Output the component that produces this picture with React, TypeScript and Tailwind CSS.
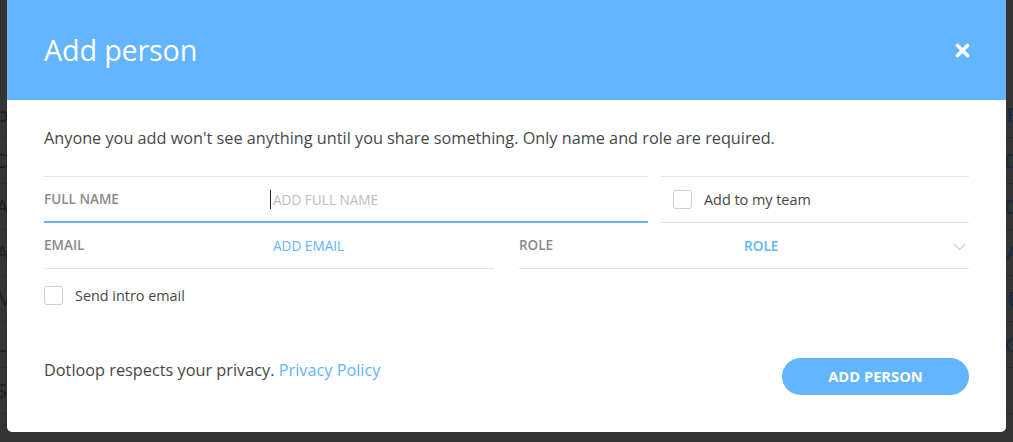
import React from "react";

const bgRowsLeft = ["p", "D", "Ac", "Ac", "M", "Li", "Sh"];
const bgRowsRight = ["R", "D", "D", "A", "E", "G", ""];

function Checkbox() {
  return <span className="block w-[19px] h-[19px] rounded-[3px] border border-[#cfcfcf] bg-white shrink-0" />;
}

export default function App() {
  return (
    <div
      className="relative w-full h-[442px] overflow-hidden bg-[#343434]"
      style={{ fontFamily: '"Open Sans", "Liberation Sans", sans-serif' }}
    >
      {/* dimmed page behind the overlay */}
      <div className="flex flex-col pt-[92px]">
        {bgRowsLeft.map((t, i) => (
          <div key={i} className="flex justify-between h-[46px] items-center border-b border-[#2c2c2c] text-[20px]">
            <span className="text-[#1e1e1e] -ml-[4px]">{t}</span>
            <span className="text-[#1a2a40] font-semibold -mr-[6px]">{bgRowsRight[i]}</span>
          </div>
        ))}
      </div>

      {/* modal */}
      <div className="absolute left-[7px] top-0 w-[999px] h-[432px] bg-white rounded-b-[5px] overflow-hidden flex flex-col">
        <div className="h-[100px] bg-[#62b5fe] flex items-center justify-between pl-[37px] pr-[37px] shrink-0">
          <h1 className="text-white text-[28.8px] font-normal leading-none tracking-[-0.2px]">Add person</h1>
          <svg width="15" height="15" viewBox="0 0 15 15" className="mr-[-1px]">
            <path d="M2.5 2.5 L12.5 12.5 M12.5 2.5 L2.5 12.5" stroke="#fff" strokeWidth="3.6" strokeLinecap="round" />
          </svg>
        </div>

        <div className="flex flex-col px-[37px] pt-[26px] pb-[37px] flex-1">
          <p className="text-[16.25px] leading-[24px] text-[#474747]">
            Anyone you add won't see anything until you share something. Only name and role are required.
          </p>

          <div className="flex gap-[13px] mt-[26px]">
            <div className="w-[604px] h-[47px] flex items-center border-t border-[#e4e4e4] border-b-2 border-b-[#62b5fe] ">
              <span className="w-[226px] text-[13.5px] font-semibold text-[#8a8a8a] shrink-0">FULL NAME</span>
              <span className="h-[19px] w-px bg-[#222]" />
              <span className="pl-[2px] text-[13.6px] text-[#bdbdbd] translate-y-[1px]">ADD FULL NAME</span>
            </div>
            <div className="flex-1 h-[47px] flex items-center gap-[12px] border-t border-b border-[#e4e4e4] pl-[12px]">
              <Checkbox />
              <span className="text-[14.4px] text-[#474747]">Add to my team</span>
            </div>
          </div>

          <div className="flex gap-[25px]">
            <div className="flex-1 h-[46px] flex items-center border-b border-[#e4e4e4]">
              <span className="w-[229px] text-[13.5px] font-semibold text-[#8a8a8a]">EMAIL</span>
              <span className="text-[13.6px] text-[#62b5fe] translate-y-[1px]">ADD EMAIL</span>
            </div>
            <div className="flex-1 h-[46px] flex items-center border-b border-[#e4e4e4]">
              <span className="w-[225px] text-[13.5px] font-semibold text-[#8a8a8a]">ROLE</span>
              <span className="text-[13.6px] font-semibold text-[#62b5fe] translate-y-[1px] flex-1">ROLE</span>
              <svg width="13" height="8" viewBox="0 0 13 8" className="mr-[3px] translate-y-[1px]">
                <path d="M1 1 L6.5 6.5 L12 1" stroke="#d0d0d0" strokeWidth="1.2" fill="none" />
              </svg>
            </div>
          </div>

          <div className="flex items-center gap-[12px] mt-[16px]">
            <Checkbox />
            <span className="text-[14.4px] text-[#474747]">Send intro email</span>
          </div>

          <div className="flex justify-between items-start mt-auto">
            <p className="text-[16.3px] leading-[24px] text-[#474747]">
              Dotloop respects your privacy. <span className="text-[#62b5fe]">Privacy Policy</span>
            </p>
            <button className="w-[187px] h-[37px] rounded-full bg-[#62b5fe] text-white text-[14.7px] font-bold">
              ADD PERSON
            </button>
          </div>
        </div>
      </div>
    </div>
  );
}
